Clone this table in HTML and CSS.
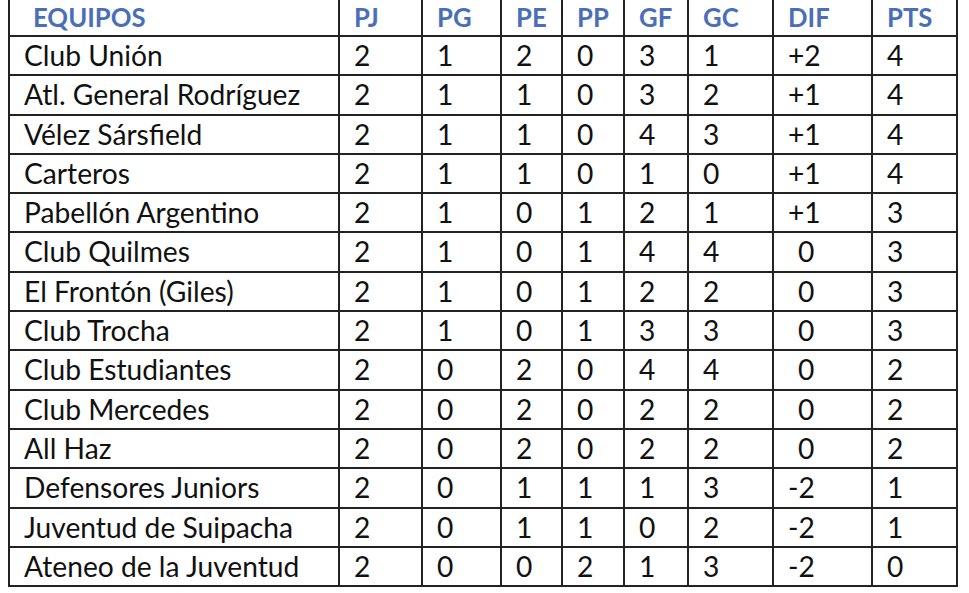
FILE: index.html
```html
<!DOCTYPE html>
<html lang="es">
<head>
<meta charset="utf-8">
<title>Tabla de posiciones</title>
<link rel="stylesheet" href="styles.css">
</head>
<body>
<table class="standings">
  <colgroup>
    <col class="c-team"><col class="c-pj"><col class="c-pg"><col class="c-pe"><col class="c-pp"><col class="c-gf"><col class="c-gc"><col class="c-dif"><col class="c-pts">
  </colgroup>
  <thead>
    <tr>
      <th class="team-head">EQUIPOS</th><th>PJ</th><th>PG</th><th>PE</th><th>PP</th><th>GF</th><th>GC</th><th>DIF</th><th>PTS</th>
    </tr>
  </thead>
  <tbody>
    <tr><td>Club Unión</td><td>2</td><td>1</td><td>2</td><td>0</td><td>3</td><td>1</td><td>+2</td><td>4</td></tr>
    <tr><td>Atl. General Rodríguez</td><td>2</td><td>1</td><td>1</td><td>0</td><td>3</td><td>2</td><td>+1</td><td>4</td></tr>
    <tr><td>Vélez Sársfield</td><td>2</td><td>1</td><td>1</td><td>0</td><td>4</td><td>3</td><td>+1</td><td>4</td></tr>
    <tr><td>Carteros</td><td>2</td><td>1</td><td>1</td><td>0</td><td>1</td><td>0</td><td>+1</td><td>4</td></tr>
    <tr><td>Pabellón Argentino</td><td>2</td><td>1</td><td>0</td><td>1</td><td>2</td><td>1</td><td>+1</td><td>3</td></tr>
    <tr><td>Club Quilmes</td><td>2</td><td>1</td><td>0</td><td>1</td><td>4</td><td>4</td><td class="zero">0</td><td>3</td></tr>
    <tr><td>El Frontón (Giles)</td><td>2</td><td>1</td><td>0</td><td>1</td><td>2</td><td>2</td><td class="zero">0</td><td>3</td></tr>
    <tr><td>Club Trocha</td><td>2</td><td>1</td><td>0</td><td>1</td><td>3</td><td>3</td><td class="zero">0</td><td>3</td></tr>
    <tr><td>Club Estudiantes</td><td>2</td><td>0</td><td>2</td><td>0</td><td>4</td><td>4</td><td class="zero">0</td><td>2</td></tr>
    <tr><td>Club Mercedes</td><td>2</td><td>0</td><td>2</td><td>0</td><td>2</td><td>2</td><td class="zero">0</td><td>2</td></tr>
    <tr><td>All Haz</td><td>2</td><td>0</td><td>2</td><td>0</td><td>2</td><td>2</td><td class="zero">0</td><td>2</td></tr>
    <tr><td>Defensores Juniors</td><td>2</td><td>0</td><td>1</td><td>1</td><td>1</td><td>3</td><td>-2</td><td>1</td></tr>
    <tr><td>Juventud de Suipacha</td><td>2</td><td>0</td><td>1</td><td>1</td><td>0</td><td>2</td><td>-2</td><td>1</td></tr>
    <tr><td>Ateneo de la Juventud</td><td>2</td><td>0</td><td>0</td><td>2</td><td>1</td><td>3</td><td>-2</td><td>0</td></tr>
  </tbody>
</table>
</body>
</html>
```
FILE: styles.css
```css
html, body {
  margin: 0;
  padding: 0;
  background: #ffffff;
}

body {
  padding: 0 0 0 8px;
  font-family: Lato, "Liberation Sans", sans-serif;
}

.standings {
  border-collapse: collapse;
  table-layout: fixed;
  width: 950px;
  color: #111111;
}

.c-team { width: 330px; }
.c-pj { width: 83px; }
.c-pg { width: 79px; }
.c-pe { width: 61px; }
.c-pp { width: 62px; }
.c-gf { width: 64px; }
.c-gc { width: 85px; }
.c-dif { width: 99px; }
.c-pts { width: 85px; }

.standings th,
.standings td {
  border: 2px solid #222222;
  text-align: left;
  padding: 0 0 0 14px;
  white-space: nowrap;
  overflow: hidden;
}

.standings th {
  border-top: none;
  height: 33px;
  color: #4a6fb8;
  font-weight: 700;
  font-size: 25.7px;
  vertical-align: top;
  padding-top: 2px;
  line-height: 30px;
}

.standings th.team-head {
  padding-left: 23px;
}

.standings td {
  height: 37.3px;
  font-size: 28.2px;
  line-height: 37.3px;
  font-weight: 400;
}

.standings td.zero {
  padding-left: 24px;
}
```
